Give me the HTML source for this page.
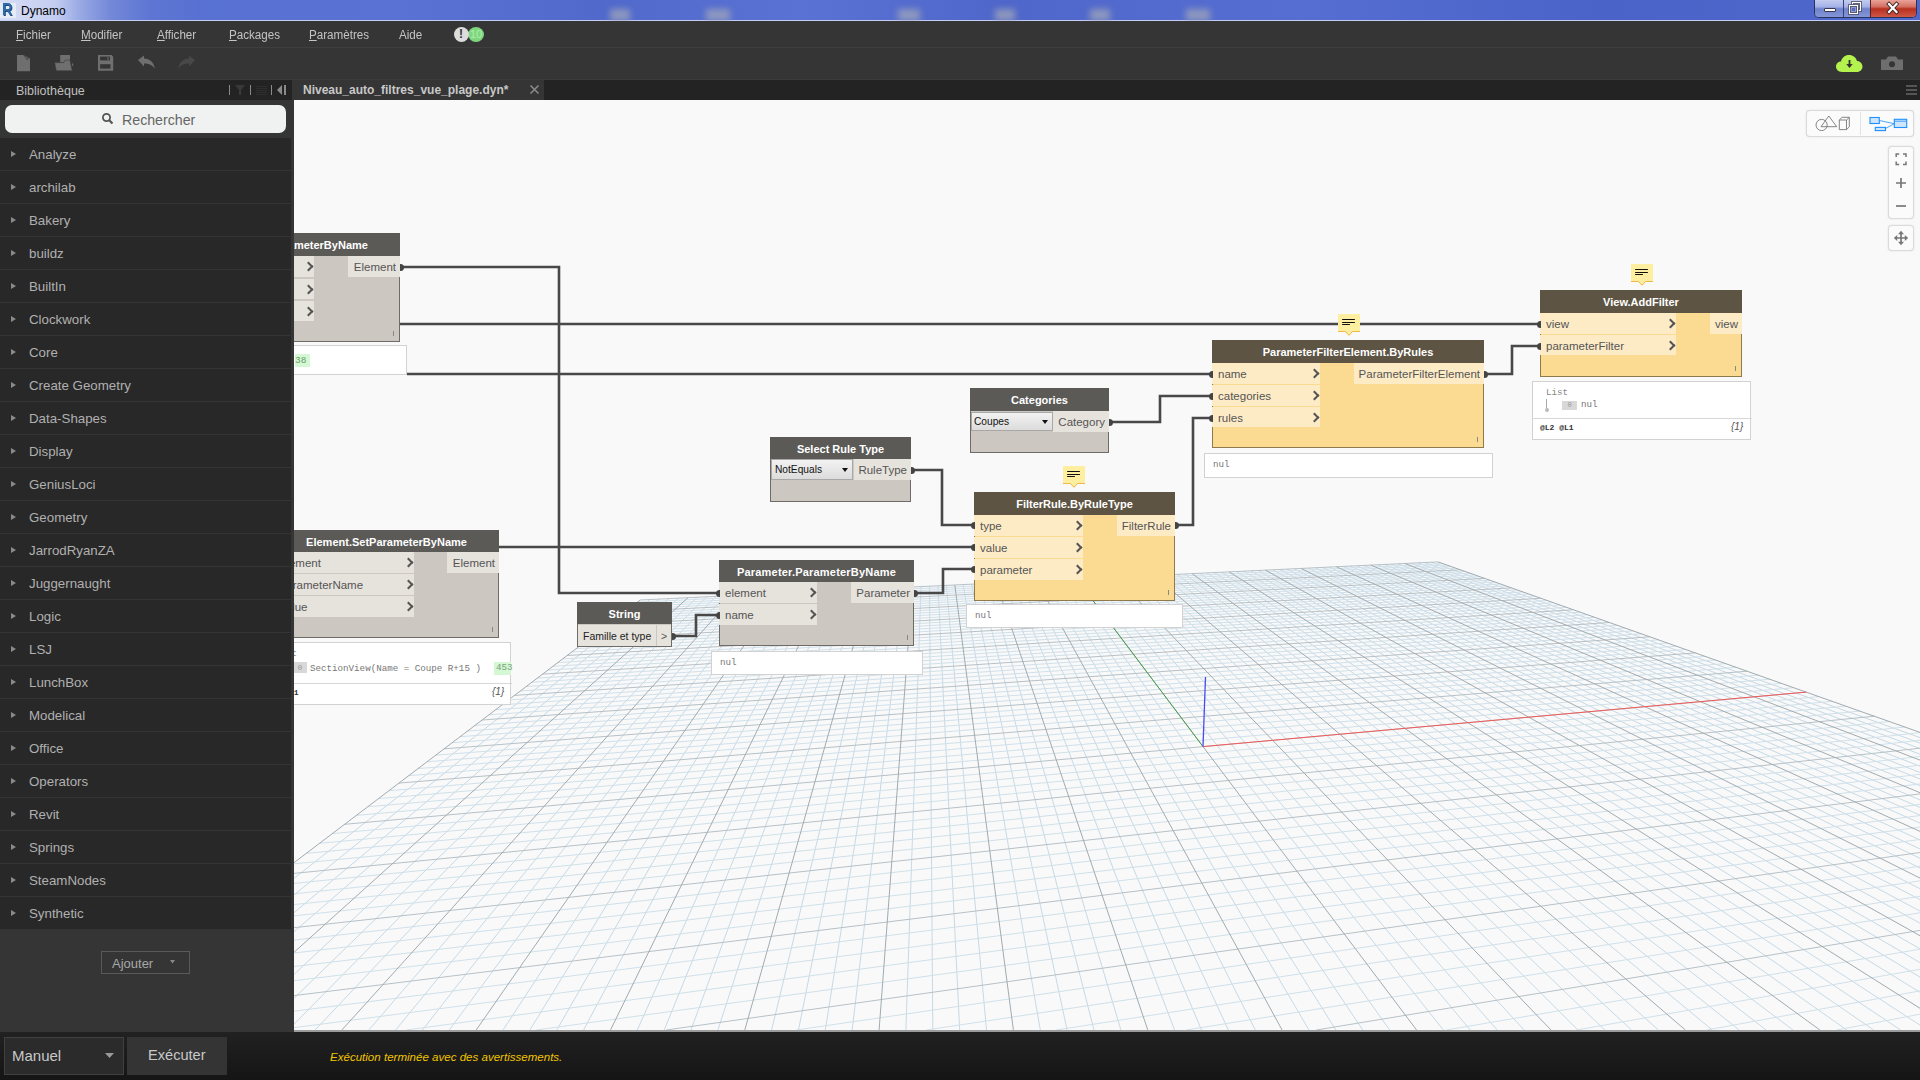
<!DOCTYPE html><html><head><meta charset="utf-8"><style>
*{margin:0;padding:0;box-sizing:border-box}
html,body{width:1920px;height:1080px;overflow:hidden;background:#353535;font-family:"Liberation Sans",sans-serif}
.abs{position:absolute}
.t{position:absolute;white-space:nowrap}
.menu span.u{text-decoration:underline;text-underline-offset:2px}
.lib{position:absolute;left:0;width:291px;height:33px;background:#282828;border-bottom:1px solid #343434}
.lib .tri{position:absolute;left:11px;top:13px;width:0;height:0;border-left:5px solid #8a8a8a;border-top:3.5px solid transparent;border-bottom:3.5px solid transparent}
.lib .lt{position:absolute;left:29px;top:9px;font-size:13.3px;color:#b0b0b0;white-space:nowrap}
.node{position:absolute}
.hdr{position:absolute;left:0;top:0;right:0;color:#fff;font-weight:bold;font-size:11px;text-align:center;white-space:nowrap;overflow:hidden}
.row{position:absolute;font-size:11.5px;color:#555;white-space:nowrap;overflow:hidden}
.chev{position:absolute;width:7px;height:7px;border-right:2.4px solid #555;border-top:2.4px solid #555;transform:rotate(45deg)}
.prev{position:absolute;background:#fff;border:1px solid #d2d2d2;font-family:"Liberation Mono",monospace;font-size:9.2px;color:#777}
.cmt{position:absolute;width:22px;height:22px}
.cmt i{position:absolute;left:4px;height:1.3px;background:#111;border-radius:1px}
</style></head><body>
<div class="abs" style="left:0;top:0;width:1920px;height:21px;background:linear-gradient(90deg,#5570d0 0px,#5a72d3 400px,#5069cb 600px,#5a72d4 800px,#4f67ca 1000px,#566ed2 1300px,#4a63c8 1600px,#5068cc 1920px)"></div>
<div class="abs" style="left:0;top:0;width:300px;height:20px;background:linear-gradient(90deg,rgba(215,222,246,1) 0px,rgba(205,213,243,0.92) 55px,rgba(175,188,234,0.75) 80px,rgba(140,156,222,0.55) 110px,rgba(110,130,214,0.3) 150px,rgba(95,115,210,0.1) 200px,rgba(90,110,208,0) 250px)"></div>
<div class="abs" style="left:0;top:19.6px;width:1920px;height:1.1px;background:#c4cef4"></div><div class="abs" style="left:0;top:20.7px;width:1920px;height:0.3px;background:#606a98"></div>
<div class="abs" style="left:0;top:3px;width:16px;height:15px;background:#e6ecf6"></div>
<div class="t" style="left:2px;top:1px;font-size:17px;font-weight:bold;color:#2f6aa8;line-height:18px;transform:scaleX(0.85);transform-origin:0 0;text-shadow:1px 1px 0 #1c4a7a">R</div>
<div class="t" style="left:21px;top:4px;font-size:12px;color:#000;line-height:15px">Dynamo</div>
<div class="abs" style="left:610px;top:9px;width:20px;height:12px;background:rgba(160,165,185,0.75);filter:blur(3px)"></div>
<div class="abs" style="left:706px;top:9px;width:24px;height:12px;background:rgba(160,165,185,0.75);filter:blur(3px)"></div>
<div class="abs" style="left:898px;top:9px;width:22px;height:12px;background:rgba(160,165,185,0.75);filter:blur(3px)"></div>
<div class="abs" style="left:995px;top:9px;width:20px;height:12px;background:rgba(160,165,185,0.75);filter:blur(3px)"></div>
<div class="abs" style="left:1090px;top:9px;width:20px;height:12px;background:rgba(160,165,185,0.75);filter:blur(3px)"></div>
<div class="abs" style="left:1186px;top:9px;width:24px;height:12px;background:rgba(160,165,185,0.75);filter:blur(3px)"></div>
<div class="abs" style="left:1814px;top:0;width:103px;height:18px;border:1px solid #27345e;border-top:none;border-radius:0 0 5px 5px;overflow:hidden;background:#7d8fd8"><div class="abs" style="left:0;top:0;width:28px;height:17px;background:linear-gradient(#c3ccef,#a4b1e6 40%,#7083cc 52%,#8496d6)"></div><div class="abs" style="left:28px;top:0;width:1px;height:17px;background:#33407a"></div><div class="abs" style="left:29px;top:0;width:26px;height:17px;background:linear-gradient(#c3ccef,#a4b1e6 40%,#7083cc 52%,#8496d6)"></div><div class="abs" style="left:55px;top:0;width:1px;height:17px;background:#5a2020"></div><div class="abs" style="left:56px;top:0;width:47px;height:17px;background:linear-gradient(#e9a39a,#d56e62 40%,#b8301f 52%,#cf5746)"></div><div class="abs" style="left:9px;top:8px;width:12px;height:4px;background:#fff;border:1px solid #3a3a50;border-radius:1px"></div></div>
<svg class="abs" style="left:1814px;top:0" width="103" height="18"><rect x="38.5" y="2.5" width="8" height="8" fill="none" stroke="#3a3a50" stroke-width="2.6"/><rect x="38.5" y="2.5" width="8" height="8" fill="none" stroke="#fff" stroke-width="1.2"/><rect x="35.5" y="5.5" width="8" height="8" fill="#8a9ad8" stroke="#3a3a50" stroke-width="2.6"/><rect x="35.5" y="5.5" width="8" height="8" fill="none" stroke="#fff" stroke-width="1.2"/><rect x="38" y="8" width="3" height="3" fill="#5a6ab8"/><path d="M75 4l7.5 8M82.5 4l-7.5 8" stroke="#3a2020" stroke-width="4" stroke-linecap="square"/><path d="M75 4l7.5 8M82.5 4l-7.5 8" stroke="#fff" stroke-width="2.2" stroke-linecap="square"/></svg>
<div class="abs" style="left:0;top:21px;width:1920px;height:26px;background:#353535"></div>
<div class="abs" style="left:0;top:47px;width:1920px;height:1px;background:#3f3f3f"></div>
<div class="t" style="left:16px;top:28px;font-size:12.5px;color:#c4c4c4;line-height:15px;transform:scaleX(0.93);transform-origin:0 0"><span style="text-decoration:underline;text-underline-offset:1px">F</span>ichier</div>
<div class="t" style="left:81px;top:28px;font-size:12.5px;color:#c4c4c4;line-height:15px;transform:scaleX(0.93);transform-origin:0 0"><span style="text-decoration:underline;text-underline-offset:1px">M</span>odifier</div>
<div class="t" style="left:157px;top:28px;font-size:12.5px;color:#c4c4c4;line-height:15px;transform:scaleX(0.93);transform-origin:0 0"><span style="text-decoration:underline;text-underline-offset:1px">A</span>fficher</div>
<div class="t" style="left:229px;top:28px;font-size:12.5px;color:#c4c4c4;line-height:15px;transform:scaleX(0.93);transform-origin:0 0"><span style="text-decoration:underline;text-underline-offset:1px">P</span>ackages</div>
<div class="t" style="left:309px;top:28px;font-size:12.5px;color:#c4c4c4;line-height:15px;transform:scaleX(0.93);transform-origin:0 0"><span style="text-decoration:underline;text-underline-offset:1px">P</span>aramètres</div>
<div class="t" style="left:399px;top:28px;font-size:12.5px;color:#c4c4c4;line-height:15px;transform:scaleX(0.93);transform-origin:0 0">Aide</div>
<div class="abs" style="left:468px;top:27px;width:16px;height:15px;border-radius:50%;background:#7fd67f"></div>
<div class="t" style="left:470px;top:28px;font-size:11px;color:#a8f0a8;line-height:13px">10</div>
<div class="abs" style="left:454px;top:27px;width:15px;height:15px;border-radius:50%;background:#dcdcdc"></div>
<div class="t" style="left:459px;top:27px;font-size:12px;font-weight:bold;color:#333;line-height:15px">!</div>
<div class="abs" style="left:0;top:48px;width:1920px;height:31px;background:#353535"></div>
<div class="abs" style="left:0;top:79px;width:1920px;height:1px;background:#3c3c3c"></div>
<svg class="abs" style="left:0;top:44px" width="220" height="36"><path d="M17 11h6l7 3.5v12.8h-13z" fill="#6f6f6f"/><path d="M23 11l3.8 5.6l3.2-2.2z" fill="#555"/><path d="M60.2 11h9.8v5h-4.5l-2 2.5h-3.3z" fill="#6f6f6f"/><path d="M54.6 18.6h8.9l2-2.6h4.5l2.2 10.8h-15.9z" fill="#6f6f6f" stroke="#3a3a3a" stroke-width="0.6"/><path d="M72 19.4h1.2v2.6h-0.8z" fill="#6f6f6f"/><path d="M98 11h13.5l1.7 1.7v14.1h-15.2z" fill="#6f6f6f"/><rect x="100.1" y="12.6" width="9.9" height="3.8" fill="#353535"/><rect x="107.4" y="13.2" width="1.1" height="2.6" fill="#6f6f6f"/><rect x="100.1" y="20.2" width="10.4" height="4.4" fill="#353535"/><path d="M138 16l6-4.5v2.9c6 0.3 9.8 3.8 11 10.6c-2.4-3.9-6-5.6-11-5.6v3z" fill="#6f6f6f"/><path d="M195 16l-6-4.5v2.9c-6 0.3-9.8 3.8-11 10.6c2.4-3.9 6-5.6 11-5.6v3z" fill="#484848"/></svg>
<svg class="abs" style="left:1833px;top:48px" width="90" height="31"><path d="M9 24c-4 0-6-3-6-5.5c0-3 2.5-5 5-5c1-4 4-6.5 8-6.5c4 0 7 2.5 8 6c3 0 5.5 2.5 5.5 5.5c0 3-2.5 5.5-5.5 5.5z" fill="#b4f24e"/><path d="M16.5 12v5" stroke="#333" stroke-width="1.8"/><path d="M13.3 16h6.4l-3.2 4z" fill="#333"/><path d="M48 11.5h5l2-3h8l2 3h5v10.5h-22z" fill="#6e6e6e"/><circle cx="59" cy="16.3" r="3" fill="#353535"/></svg>
<div class="abs" style="left:0;top:80px;width:292px;height:20px;background:#232323"></div>
<div class="t" style="left:16px;top:83px;font-size:12.5px;color:#c0c0c0;line-height:16px">Bibliothèque</div>
<svg class="abs" style="left:220px;top:80px" width="72" height="20"><rect x="9" y="5" width="1" height="10" fill="#8a8a8a"/><rect x="30" y="5" width="1" height="10" fill="#8a8a8a"/><rect x="51" y="5" width="1" height="10" fill="#8a8a8a"/><path d="M15 5h10l-3.8 4.8v5.2h-2.4v-5.2z" fill="#393939"/><path d="M36 6.5h11M36 8.5h11M36 10.5h11M36 12.5h11M36 14.5h11" stroke="#2e2e2e" stroke-width="1"/><path d="M62 5v10l-5-5z" fill="#8a8a8a"/><rect x="64" y="5" width="2" height="10" fill="#8a8a8a"/></svg>
<div class="abs" style="left:544px;top:80px;width:1376px;height:20px;background:#232323"></div>
<div class="t" style="left:303px;top:82px;font-size:12px;font-weight:bold;color:#c8c8c8;line-height:16px">Niveau_auto_filtres_vue_plage.dyn*</div>
<svg class="abs" style="left:528px;top:83px" width="14" height="14"><path d="M2.5 2.5l8 8M10.5 2.5l-8 8" stroke="#8a8a8a" stroke-width="1.6"/></svg>
<svg class="abs" style="left:1905px;top:84px" width="13" height="12"><rect x="1" y="1" width="11" height="2" fill="#555"/><rect x="1" y="5" width="11" height="2" fill="#555"/><rect x="1" y="9" width="11" height="2" fill="#555"/></svg>
<div class="abs" style="left:5px;top:105px;width:281px;height:28px;background:#f0f2f1;border-radius:7px"></div>
<svg class="abs" style="left:101px;top:112px" width="14" height="14"><circle cx="5.5" cy="5.5" r="3.6" fill="none" stroke="#555" stroke-width="1.8"/><path d="M8 8l3.5 3.5" stroke="#555" stroke-width="2.2"/></svg>
<div class="t" style="left:122px;top:112px;font-size:14.2px;color:#666;line-height:16px">Rechercher</div>
<div class="lib" style="top:138px"><div class="tri"></div><div class="lt">Analyze</div></div>
<div class="lib" style="top:171px"><div class="tri"></div><div class="lt">archilab</div></div>
<div class="lib" style="top:204px"><div class="tri"></div><div class="lt">Bakery</div></div>
<div class="lib" style="top:237px"><div class="tri"></div><div class="lt">buildz</div></div>
<div class="lib" style="top:270px"><div class="tri"></div><div class="lt">BuiltIn</div></div>
<div class="lib" style="top:303px"><div class="tri"></div><div class="lt">Clockwork</div></div>
<div class="lib" style="top:336px"><div class="tri"></div><div class="lt">Core</div></div>
<div class="lib" style="top:369px"><div class="tri"></div><div class="lt">Create Geometry</div></div>
<div class="lib" style="top:402px"><div class="tri"></div><div class="lt">Data-Shapes</div></div>
<div class="lib" style="top:435px"><div class="tri"></div><div class="lt">Display</div></div>
<div class="lib" style="top:468px"><div class="tri"></div><div class="lt">GeniusLoci</div></div>
<div class="lib" style="top:501px"><div class="tri"></div><div class="lt">Geometry</div></div>
<div class="lib" style="top:534px"><div class="tri"></div><div class="lt">JarrodRyanZA</div></div>
<div class="lib" style="top:567px"><div class="tri"></div><div class="lt">Juggernaught</div></div>
<div class="lib" style="top:600px"><div class="tri"></div><div class="lt">Logic</div></div>
<div class="lib" style="top:633px"><div class="tri"></div><div class="lt">LSJ</div></div>
<div class="lib" style="top:666px"><div class="tri"></div><div class="lt">LunchBox</div></div>
<div class="lib" style="top:699px"><div class="tri"></div><div class="lt">Modelical</div></div>
<div class="lib" style="top:732px"><div class="tri"></div><div class="lt">Office</div></div>
<div class="lib" style="top:765px"><div class="tri"></div><div class="lt">Operators</div></div>
<div class="lib" style="top:798px"><div class="tri"></div><div class="lt">Revit</div></div>
<div class="lib" style="top:831px"><div class="tri"></div><div class="lt">Springs</div></div>
<div class="lib" style="top:864px"><div class="tri"></div><div class="lt">SteamNodes</div></div>
<div class="lib" style="top:897px"><div class="tri"></div><div class="lt">Synthetic</div></div>
<div class="abs" style="left:101px;top:951px;width:89px;height:23px;border:1px solid #5a5a5a"></div>
<div class="t" style="left:112px;top:956px;font-size:13px;color:#a8a8a8;line-height:15px">Ajouter</div>
<svg class="abs" style="left:168px;top:958px" width="10" height="8"><path d="M2 2h5l-2.5 3.5z" fill="#888"/></svg>
<div class="abs" style="left:294px;top:100px;width:1626px;height:930px;background:#f9f9f9;overflow:hidden">
<svg class="abs" style="left:-294px;top:-100px" width="1920" height="1080">
<path d="M294.0 878.3L649.9 599.5M294.0 894.9L659.5 599.0M294.0 912.7L669.0 598.6M294.0 931.8L678.5 598.1M294.0 974.4L697.4 597.2M294.0 998.3L706.8 596.8M294.0 1024.2L716.1 596.3M315.1 1030.0L725.4 595.9M368.8 1030.0L744.0 595.0M395.6 1030.0L753.1 594.6M422.5 1030.0L762.3 594.1M449.3 1030.0L771.4 593.7M503.0 1030.0L789.6 592.8M529.9 1030.0L798.6 592.4M556.8 1030.0L807.5 592.0M583.6 1030.0L816.5 591.6M637.3 1030.0L834.3 590.7M664.2 1030.0L843.1 590.3M691.0 1030.0L851.9 589.9M717.9 1030.0L860.7 589.5M771.6 1030.0L878.1 588.6M798.5 1030.0L886.7 588.2M825.3 1030.0L895.4 587.8M852.2 1030.0L903.9 587.4M905.9 1030.0L921.0 586.6M932.8 1030.0L929.5 586.2M959.7 1030.0L938.0 585.8M986.5 1030.0L946.4 585.4M1040.3 1030.0L963.1 584.6M1067.1 1030.0L971.5 584.2M1094.0 1030.0L979.8 583.8M1120.9 1030.0L988.0 583.4M1174.6 1030.0L1004.5 582.6M1201.5 1030.0L1012.6 582.2M1228.4 1030.0L1020.8 581.8M1255.3 1030.0L1028.9 581.4M1309.0 1030.0L1045.0 580.7M1335.9 1030.0L1053.0 580.3M1362.8 1030.0L1061.0 579.9M1389.7 1030.0L1068.9 579.5M1443.4 1030.0L1084.7 578.8M1470.3 1030.0L1092.6 578.4M1497.2 1030.0L1100.4 578.0M1524.1 1030.0L1108.2 577.7M1577.9 1030.0L1123.7 576.9M1604.8 1030.0L1131.5 576.5M1631.6 1030.0L1139.1 576.2M1658.5 1030.0L1146.8 575.8M1712.3 1030.0L1162.0 575.1M1739.2 1030.0L1169.6 574.7M1766.1 1030.0L1177.2 574.4M1793.0 1030.0L1184.7 574.0M1846.8 1030.0L1199.6 573.3M1873.7 1030.0L1207.1 572.9M1900.6 1030.0L1214.5 572.6M1920.0 1025.1L1221.8 572.2M1920.0 992.3L1236.5 571.5M1920.0 977.1L1243.8 571.2M1920.0 962.6L1251.1 570.8M1920.0 948.8L1258.3 570.5M1920.0 923.1L1272.8 569.8M1920.0 911.1L1279.9 569.5M1920.0 899.6L1287.1 569.1M1920.0 888.7L1294.2 568.8M1920.0 868.0L1308.4 568.1M1920.0 858.3L1315.4 567.8M1920.0 849.0L1322.4 567.4M1920.0 840.0L1329.4 567.1M1920.0 823.1L1343.3 566.4M1920.0 815.1L1350.2 566.1M1920.0 807.4L1357.1 565.8M1920.0 799.9L1364.0 565.5M1920.0 785.8L1377.7 564.8M1920.0 779.0L1384.5 564.5M1920.0 772.5L1391.2 564.2M1920.0 766.2L1398.0 563.8M1920.0 754.2L1411.4 563.2M1920.0 748.5L1418.1 562.9M1920.0 743.0L1424.8 562.6M1920.0 737.6L1431.4 562.2" stroke="#c6d9e6" stroke-width="1" fill="none"/>
<path d="M1836.9 1030.0L1920.0 1014.2M1706.7 1030.0L1920.0 990.9M1576.6 1030.0L1920.0 969.3M1446.4 1030.0L1920.0 949.2M1186.3 1030.0L1920.0 912.8M1056.2 1030.0L1920.0 896.3M926.2 1030.0L1920.0 880.8M796.2 1030.0L1920.0 866.2M536.2 1030.0L1920.0 839.4M406.2 1030.0L1920.0 827.1M294.0 1027.7L1920.0 815.5M294.0 1011.2L1920.0 804.4M294.0 980.7L1920.0 783.9M294.0 966.5L1920.0 774.3M294.0 953.0L1920.0 765.2M294.0 940.1L1920.0 756.5M294.0 915.9L1920.0 740.3M294.0 904.6L1920.0 732.7M294.0 893.8L1904.8 727.0M294.0 883.4L1889.4 721.5M294.0 863.8L1859.9 711.1M306.3 853.4L1845.9 706.1M319.6 843.3L1832.2 701.3M332.4 833.6L1819.0 696.6M356.4 815.4L1793.6 687.7M367.6 806.8L1781.5 683.4M378.5 798.6L1769.7 679.2M388.9 790.7L1758.2 675.1M408.6 775.7L1736.1 667.3M418.0 768.6L1725.5 663.6M427.0 761.8L1715.2 659.9M435.7 755.2L1705.1 656.4M452.2 742.7L1685.8 649.5M460.0 736.7L1676.5 646.2M467.6 731.0L1667.4 643.0M474.9 725.4L1658.5 639.9M489.0 714.8L1641.3 633.8M495.6 709.7L1633.1 630.9M502.1 704.8L1625.0 628.1M508.4 700.0L1617.1 625.3M520.5 690.9L1601.8 619.9M526.2 686.5L1594.4 617.3M531.8 682.2L1587.2 614.7M537.3 678.1L1580.2 612.2M547.8 670.1L1566.5 607.4M552.8 666.3L1559.8 605.0M557.7 662.6L1553.3 602.7M562.4 659.0L1547.0 600.5M571.6 652.0L1534.6 596.1M576.0 648.7L1528.6 594.0M580.4 645.4L1522.8 591.9M584.6 642.2L1517.0 589.9M592.7 636.1L1505.8 585.9M596.6 633.1L1500.4 584.0M600.4 630.2L1495.0 582.1M604.1 627.4L1489.8 580.3M611.4 621.9L1479.6 576.7M614.9 619.2L1474.7 574.9M618.3 616.6L1469.8 573.2M621.6 614.1L1465.0 571.5M628.1 609.2L1455.7 568.2M631.2 606.8L1451.2 566.6M634.3 604.5L1446.7 565.0M637.3 602.2L1442.3 563.5" stroke="#d0e0ea" stroke-width="1" fill="none"/>
<path d="M1316.3 1030.0L1920.0 930.4M666.2 1030.0L1920.0 852.5M294.0 995.6L1920.0 793.9M294.0 927.7L1920.0 748.2M294.0 873.4L1874.4 716.2M344.6 824.3L1806.1 692.1M399.0 783.1L1747.0 671.2M444.1 748.8L1695.3 652.9M482.1 720.0L1649.8 636.8M514.5 695.4L1609.4 622.5M542.6 674.1L1573.2 609.8M567.1 655.5L1540.7 598.3M588.7 639.1L1511.4 587.9M607.8 624.6L1484.7 578.4M624.9 611.6L1460.3 569.8M640.3 600.0L1438.0 561.9" stroke="#b6c1c7" stroke-width="1" fill="none"/>
<path d="M294.0 862.7L640.3 600.0M294.0 952.3L688.0 597.7M341.9 1030.0L734.7 595.5M476.2 1030.0L780.5 593.3M610.5 1030.0L825.4 591.1M744.8 1030.0L869.4 589.0M879.1 1030.0L912.5 587.0M1013.4 1030.0L954.8 585.0M1147.8 1030.0L996.3 583.0M1282.1 1030.0L1036.9 581.1M1416.6 1030.0L1076.8 579.1M1551.0 1030.0L1116.0 577.3M1685.4 1030.0L1154.4 575.5M1819.9 1030.0L1192.2 573.7M1920.0 1008.3L1229.2 571.9M1920.0 935.7L1265.6 570.2M1920.0 878.1L1301.3 568.5M1920.0 831.4L1336.4 566.8M1920.0 792.7L1370.8 565.1M1920.0 760.1L1404.7 563.5M1920.0 732.4L1438.0 561.9" stroke="#a0abb1" stroke-width="1" fill="none"/>
<path d="M1203.0 746.6L1806.1 692.1" stroke="#f05a5a" stroke-width="1"/>
<path d="M1203.0 746.6L1076.8 579.1" stroke="#4a9e4a" stroke-width="1"/>
<path d="M1203.0 746.6L1205.5 677" stroke="#4a4af0" stroke-width="1.3"/>
</svg>
</div>
<div class="abs" style="left:294px;top:100px;width:1626px;height:930px;overflow:hidden">
<svg class="abs" style="left:-294px;top:-100px" width="1920" height="1080">
<path d="M400 267 L559 267 L559 593 L719 593" stroke="#484848" stroke-width="2.6" fill="none" stroke-linejoin="miter"/>
<path d="M294 324 L1540 324" stroke="#484848" stroke-width="2.6" fill="none" stroke-linejoin="miter"/>
<path d="M407 374 L1212 374" stroke="#484848" stroke-width="2.6" fill="none" stroke-linejoin="miter"/>
<path d="M499 547 L974 547" stroke="#484848" stroke-width="2.6" fill="none" stroke-linejoin="miter"/>
<path d="M911 470 L942 470 L942 525 L974 525" stroke="#484848" stroke-width="2.6" fill="none" stroke-linejoin="miter"/>
<path d="M672 636 L696 636 L696 615 L719 615" stroke="#484848" stroke-width="2.6" fill="none" stroke-linejoin="miter"/>
<path d="M914 593 L943 593 L943 569 L974 569" stroke="#484848" stroke-width="2.6" fill="none" stroke-linejoin="miter"/>
<path d="M1109 422 L1160 422 L1160 396 L1212 396" stroke="#484848" stroke-width="2.6" fill="none" stroke-linejoin="miter"/>
<path d="M1175 525 L1193 525 L1193 418 L1212 418" stroke="#484848" stroke-width="2.6" fill="none" stroke-linejoin="miter"/>
<path d="M1484 374 L1512 374 L1512 346 L1540 346" stroke="#484848" stroke-width="2.6" fill="none" stroke-linejoin="miter"/>
</svg>
<div class="node" style="left:-119px;top:133px;width:225px;height:109px;background:#ccc7c0;outline:1px solid #6f6c68;outline-offset:-1px">
<div class="hdr" style="height:23px;line-height:25px;background:#5c5a57">Element.SetParameterByName</div>
<div class="row" style="left:0;top:23px;width:139px;height:21px;line-height:23px;background:#e6e2dc;padding-left:6px"></div>
<div class="chev" style="left:130px;top:30.0px"></div>
<div class="row" style="left:0;top:46px;width:139px;height:20px;line-height:22px;background:#e6e2dc;padding-left:6px"></div>
<div class="chev" style="left:130px;top:52.5px"></div>
<div class="row" style="left:0;top:68px;width:139px;height:20px;line-height:22px;background:#e6e2dc;padding-left:6px"></div>
<div class="chev" style="left:130px;top:74.5px"></div>
<div class="row" style="left:173px;top:23px;width:52px;height:21px;line-height:23px;background:#e6e2dc;text-align:right;padding-right:4px">Element</div>
<div class="abs" style="left:218px;top:98px;width:1px;height:5px;background:#888"></div>
</div>
<div class="abs" style="left:106px;top:163.5px;width:4px;height:7px;border-radius:0 3.5px 3.5px 0;background:#444"></div>
<div class="prev" style="left:-119px;top:245px;width:232px;height:30px"><div class="abs" style="left:119px;top:8px;width:15px;height:13px;background:#d4f7d4;color:#6a9a6a;font-size:9.5px;line-height:13px;padding-left:0px">38</div></div>
<div class="node" style="left:-20px;top:430px;width:225px;height:108px;background:#ccc7c0;outline:1px solid #6f6c68;outline-offset:-1px">
<div class="hdr" style="height:22px;line-height:24px;background:#5c5a57">Element.SetParameterByName</div>
<div class="row" style="left:0;top:22px;width:140px;height:21px;line-height:23px;background:#e6e2dc;padding-left:6px">element</div>
<div class="chev" style="left:131px;top:29.0px"></div>
<div class="row" style="left:0;top:44px;width:140px;height:21px;line-height:23px;background:#e6e2dc;padding-left:6px">parameterName</div>
<div class="chev" style="left:131px;top:51.0px"></div>
<div class="row" style="left:0;top:66px;width:140px;height:21px;line-height:23px;background:#e6e2dc;padding-left:6px">value</div>
<div class="chev" style="left:131px;top:73.0px"></div>
<div class="row" style="left:173px;top:22px;width:52px;height:21px;line-height:23px;background:#e6e2dc;text-align:right;padding-right:4px">Element</div>
<div class="abs" style="left:218px;top:97px;width:1px;height:5px;background:#888"></div>
</div>
<div class="prev" style="left:-33px;top:542px;width:250px;height:63px"><div class="t" style="left:13px;top:5px;line-height:12px;color:#888">List</div><div class="abs" style="left:0;top:40px;width:250px;height:1px;background:#d8d8d8"></div><div class="abs" style="left:31px;top:19px;width:14px;height:11px;background:#d8d8d8;color:#999;font-size:8px;line-height:11px;text-align:center">0</div><div class="t" style="left:48px;top:19px;line-height:13px">SectionView(Name = Coupe R+15 )</div><div class="abs" style="left:232px;top:19px;width:17px;height:13px;background:#d4f7d4;color:#7aa07a;line-height:12px;padding-left:2px">453</div><div class="t" style="left:3px;top:45px;font-size:8px;color:#333;line-height:10px;font-weight:bold">@L2 @L1</div><div class="t" style="left:230px;top:43px;font-family:Liberation Sans;font-style:italic;font-size:10px;color:#555">{1}</div></div>
<div class="node" style="left:476px;top:337px;width:141px;height:65px;background:#ccc7c0;outline:1px solid #6f6c68;outline-offset:-1px">
<div class="hdr" style="height:22px;line-height:24px;background:#5c5a57">Select Rule Type</div>
<div class="row" style="left:84px;top:22px;width:57px;height:21px;line-height:23px;background:#e6e2dc;text-align:right;padding-right:4px">RuleType</div>
</div>
<div class="abs" style="left:477px;top:359px;width:82px;height:21px;background:linear-gradient(#f2f2f2,#dcdcdc);border:1px solid #a8a8a8;font-size:10.2px;color:#111;line-height:19px;padding-left:3px">NotEquals</div>
<svg class="abs" style="left:547px;top:367px" width="8" height="6"><path d="M1 1h6l-3 4z" fill="#111"/></svg>
<div class="abs" style="left:617px;top:366.5px;width:4px;height:7px;border-radius:0 3.5px 3.5px 0;background:#444"></div>
<div class="node" style="left:283px;top:502px;width:95px;height:45px;background:#ccc7c0;outline:1px solid #6f6c68;outline-offset:-1px">
<div class="hdr" style="height:22px;line-height:24px;background:#5c5a57">String</div>
</div>
<div class="abs" style="left:284px;top:525px;width:78px;height:21px;background:#e6e2dc;font-size:10.5px;color:#222;line-height:23px;padding-left:5px;white-space:nowrap">Famille et type</div>
<div class="abs" style="left:363px;top:525px;width:14px;height:21px;background:#e6e2dc;font-size:10.5px;color:#555;line-height:23px;padding-left:4px">&gt;</div>
<div class="abs" style="left:378px;top:532.5px;width:4px;height:7px;border-radius:0 3.5px 3.5px 0;background:#444"></div>
<div class="node" style="left:425px;top:460px;width:195px;height:86px;background:#ccc7c0;outline:1px solid #6f6c68;outline-offset:-1px">
<div class="hdr" style="height:22px;line-height:24px;background:#5c5a57"><span style="letter-spacing:0.2px">Parameter.ParameterByName</span></div>
<div class="row" style="left:0;top:22px;width:98px;height:21px;line-height:23px;background:#e6e2dc;padding-left:6px">element</div>
<div class="chev" style="left:89px;top:29.0px"></div>
<div class="row" style="left:0;top:44px;width:98px;height:21px;line-height:23px;background:#e6e2dc;padding-left:6px">name</div>
<div class="chev" style="left:89px;top:51.0px"></div>
<div class="row" style="left:132px;top:22px;width:63px;height:21px;line-height:23px;background:#e6e2dc;text-align:right;padding-right:4px">Parameter</div>
<div class="abs" style="left:188px;top:75px;width:1px;height:5px;background:#888"></div>
</div>
<div class="abs" style="left:422px;top:489.5px;width:4px;height:7px;border-radius:3.5px 0 0 3.5px;background:#444"></div>
<div class="abs" style="left:422px;top:511.5px;width:4px;height:7px;border-radius:3.5px 0 0 3.5px;background:#444"></div>
<div class="abs" style="left:620px;top:489.5px;width:4px;height:7px;border-radius:0 3.5px 3.5px 0;background:#444"></div>
<div class="prev" style="left:417px;top:551px;width:212px;height:24px"><div class="t" style="left:8px;top:5px;line-height:12px">nul</div></div>
<div class="node" style="left:676px;top:288px;width:139px;height:65px;background:#ccc7c0;outline:1px solid #6f6c68;outline-offset:-1px">
<div class="hdr" style="height:23px;line-height:25px;background:#5c5a57">Categories</div>
<div class="row" style="left:83px;top:23px;width:56px;height:21px;line-height:23px;background:#e6e2dc;text-align:right;padding-right:4px">Category</div>
</div>
<div class="abs" style="left:677px;top:312px;width:82px;height:19px;background:linear-gradient(#f2f2f2,#dcdcdc);border:1px solid #a8a8a8;font-size:10.2px;color:#111;line-height:17px;padding-left:2px">Coupes</div>
<svg class="abs" style="left:747px;top:319px" width="8" height="6"><path d="M1 1h6l-3 4z" fill="#111"/></svg>
<div class="abs" style="left:815px;top:318.5px;width:4px;height:7px;border-radius:0 3.5px 3.5px 0;background:#444"></div>
<div class="cmt" style="left:769px;top:366px"><svg width="22" height="22" style="position:absolute;left:0;top:0"><path d="M0 0H22V17.5H15L11 21.6L7 17.5H0Z" fill="#fdeea0"/><path d="M0 17.5H7.5L11 21.3L14.5 17.5H22" fill="none" stroke="#f0b848" stroke-width="1"/></svg><i style="top:5px;width:13px"></i><i style="top:8px;width:13px"></i><i style="top:10.1px;width:8px"></i></div>
<div class="node" style="left:680px;top:392px;width:201px;height:109px;background:#fbda91;outline:1px solid #8f7a4e;outline-offset:-1px">
<div class="hdr" style="height:23px;line-height:25px;background:#5e5443">FilterRule.ByRuleType</div>
<div class="row" style="left:0;top:23px;width:109px;height:21px;line-height:23px;background:#fdebc6;padding-left:6px">type</div>
<div class="chev" style="left:100px;top:30.0px"></div>
<div class="row" style="left:0;top:45px;width:109px;height:21px;line-height:23px;background:#fdebc6;padding-left:6px">value</div>
<div class="chev" style="left:100px;top:52.0px"></div>
<div class="row" style="left:0;top:67px;width:109px;height:21px;line-height:23px;background:#fdebc6;padding-left:6px">parameter</div>
<div class="chev" style="left:100px;top:74.0px"></div>
<div class="row" style="left:143px;top:23px;width:58px;height:21px;line-height:23px;background:#fdebc6;text-align:right;padding-right:4px">FilterRule</div>
<div class="abs" style="left:194px;top:98px;width:1px;height:5px;background:#888"></div>
</div>
<div class="abs" style="left:677px;top:421.5px;width:4px;height:7px;border-radius:3.5px 0 0 3.5px;background:#444"></div>
<div class="abs" style="left:677px;top:443.5px;width:4px;height:7px;border-radius:3.5px 0 0 3.5px;background:#444"></div>
<div class="abs" style="left:677px;top:465.5px;width:4px;height:7px;border-radius:3.5px 0 0 3.5px;background:#444"></div>
<div class="abs" style="left:881px;top:421.5px;width:4px;height:7px;border-radius:0 3.5px 3.5px 0;background:#444"></div>
<div class="prev" style="left:672px;top:504px;width:217px;height:24px"><div class="t" style="left:8px;top:5px;line-height:12px">nul</div></div>
<div class="cmt" style="left:1044px;top:214px"><svg width="22" height="22" style="position:absolute;left:0;top:0"><path d="M0 0H22V17.5H15L11 21.6L7 17.5H0Z" fill="#fdeea0"/><path d="M0 17.5H7.5L11 21.3L14.5 17.5H22" fill="none" stroke="#f0b848" stroke-width="1"/></svg><i style="top:5px;width:13px"></i><i style="top:8px;width:13px"></i><i style="top:10.1px;width:8px"></i></div>
<div class="node" style="left:918px;top:240px;width:272px;height:108px;background:#fbda91;outline:1px solid #8f7a4e;outline-offset:-1px">
<div class="hdr" style="height:23px;line-height:25px;background:#5e5443">ParameterFilterElement.ByRules</div>
<div class="row" style="left:0;top:23px;width:108px;height:21px;line-height:23px;background:#fdebc6;padding-left:6px">name</div>
<div class="chev" style="left:99px;top:30.0px"></div>
<div class="row" style="left:0;top:45px;width:108px;height:21px;line-height:23px;background:#fdebc6;padding-left:6px">categories</div>
<div class="chev" style="left:99px;top:52.0px"></div>
<div class="row" style="left:0;top:67px;width:108px;height:20px;line-height:22px;background:#fdebc6;padding-left:6px">rules</div>
<div class="chev" style="left:99px;top:73.5px"></div>
<div class="row" style="left:142px;top:23px;width:130px;height:21px;line-height:23px;background:#fdebc6;text-align:right;padding-right:4px">ParameterFilterElement</div>
<div class="abs" style="left:265px;top:97px;width:1px;height:5px;background:#888"></div>
</div>
<div class="abs" style="left:915px;top:270.5px;width:4px;height:7px;border-radius:3.5px 0 0 3.5px;background:#444"></div>
<div class="abs" style="left:915px;top:292.5px;width:4px;height:7px;border-radius:3.5px 0 0 3.5px;background:#444"></div>
<div class="abs" style="left:915px;top:314.5px;width:4px;height:7px;border-radius:3.5px 0 0 3.5px;background:#444"></div>
<div class="abs" style="left:1190px;top:270.5px;width:4px;height:7px;border-radius:0 3.5px 3.5px 0;background:#444"></div>
<div class="prev" style="left:910px;top:353px;width:289px;height:25px"><div class="t" style="left:8px;top:5px;line-height:12px">nul</div></div>
<div class="cmt" style="left:1337px;top:164px"><svg width="22" height="22" style="position:absolute;left:0;top:0"><path d="M0 0H22V17.5H15L11 21.6L7 17.5H0Z" fill="#fdeea0"/><path d="M0 17.5H7.5L11 21.3L14.5 17.5H22" fill="none" stroke="#f0b848" stroke-width="1"/></svg><i style="top:5px;width:13px"></i><i style="top:8px;width:13px"></i><i style="top:10.1px;width:8px"></i></div>
<div class="node" style="left:1246px;top:190px;width:202px;height:87px;background:#fbda91;outline:1px solid #8f7a4e;outline-offset:-1px">
<div class="hdr" style="height:23px;line-height:25px;background:#5e5443">View.AddFilter</div>
<div class="row" style="left:0;top:23px;width:136px;height:21px;line-height:23px;background:#fdebc6;padding-left:6px">view</div>
<div class="chev" style="left:127px;top:30.0px"></div>
<div class="row" style="left:0;top:45px;width:136px;height:20px;line-height:22px;background:#fdebc6;padding-left:6px">parameterFilter</div>
<div class="chev" style="left:127px;top:51.5px"></div>
<div class="row" style="left:170px;top:23px;width:32px;height:21px;line-height:23px;background:#fdebc6;text-align:right;padding-right:4px">view</div>
<div class="abs" style="left:195px;top:76px;width:1px;height:5px;background:#888"></div>
</div>
<div class="abs" style="left:1243px;top:220.5px;width:4px;height:7px;border-radius:3.5px 0 0 3.5px;background:#444"></div>
<div class="abs" style="left:1243px;top:242.5px;width:4px;height:7px;border-radius:3.5px 0 0 3.5px;background:#444"></div>
<div class="prev" style="left:1238px;top:281px;width:219px;height:59px"><div class="t" style="left:13px;top:5px;line-height:12px;color:#888">List</div><div class="abs" style="left:13px;top:17px;width:1px;height:10px;background:#aaa"></div><div class="abs" style="left:11.5px;top:26px;width:4px;height:4px;border-radius:50%;background:#bbb"></div><div class="abs" style="left:29px;top:19px;width:15px;height:9px;background:#d8d8d8;color:#999;font-size:7px;line-height:9px;text-align:center">0</div><div class="t" style="left:48px;top:16px;line-height:13px">nul</div><div class="abs" style="left:0;top:36px;width:219px;height:1px;background:#d8d8d8"></div><div class="t" style="left:7px;top:41px;font-size:8px;color:#333;line-height:10px;font-weight:bold">@L2 @L1</div><div class="t" style="left:198px;top:39px;font-family:Liberation Sans;font-style:italic;font-size:10px;color:#555">{1}</div></div>
</div>
<div class="abs" style="left:1807px;top:111px;width:106px;height:25px;background:#fbfbfb;border-radius:3px;box-shadow:0 0 1.5px 0.5px #d4d4d4"></div>
<div class="abs" style="left:1860px;top:112px;width:1px;height:23px;background:#e2e2e2"></div>
<svg class="abs" style="left:1807px;top:111px" width="106" height="25"><circle cx="14.6" cy="14" r="5.6" fill="none" stroke="#777" stroke-width="0.9"/><path d="M14 15.7l7.8-10.7l7.9 10.7z" fill="none" stroke="#777" stroke-width="0.9"/><path d="M32.3 9h7.2v9.6h-7.2zM32.3 9l2.8-2.7h7.2v9.6l-2.8 2.7M39.5 9l2.8-2.7" fill="none" stroke="#777" stroke-width="0.9"/><rect x="63" y="6.5" width="9.3" height="6" fill="#cfe5fb" stroke="#1e90ff" stroke-width="1.1"/><rect x="68.3" y="16.4" width="10.2" height="3.2" fill="#cfe5fb" stroke="#1e90ff" stroke-width="1.1"/><rect x="87.3" y="8.3" width="12.4" height="8.2" fill="#cfe5fb" stroke="#1e90ff" stroke-width="1.1"/><path d="M87.3 10.2h12.4" stroke="#1e90ff" stroke-width="0.8"/><path d="M72.3 9.5l15 3.2M78.5 17.5l8.8-4.8" stroke="#1e90ff" stroke-width="0.8"/></svg>
<div class="abs" style="left:1889px;top:147px;width:24px;height:71px;background:#fbfbfb;border-radius:3px;box-shadow:0 0 1.5px 0.5px #d4d4d4"></div>
<svg class="abs" style="left:1889px;top:147px" width="24" height="71"><path d="M7.2 10v-3h3M14 7h3v3M17 14.5v3h-3M10.2 17.5h-3v-3" fill="none" stroke="#777" stroke-width="1.5"/><path d="M12 31v10M7 36h10" stroke="#777" stroke-width="1.7"/><path d="M7 59h10" stroke="#777" stroke-width="1.7"/></svg>
<div class="abs" style="left:1889px;top:226px;width:24px;height:24px;background:#fbfbfb;border-radius:3px;box-shadow:0 0 1.5px 0.5px #d4d4d4"></div>
<svg class="abs" style="left:1889px;top:226px" width="24" height="24"><path d="M12 7v10M7 12h10" stroke="#777" stroke-width="1.7"/><path d="M12 4.8l-3 3.4h6zM12 19.2l-3-3.4h6zM4.8 12l3.4-3v6zM19.2 12l-3.4-3v6z" fill="#777"/></svg>
<div class="abs" style="left:294px;top:1030px;width:1626px;height:2px;background:#9c9c9c"></div><div class="abs" style="left:0;top:1032px;width:1920px;height:48px;background:linear-gradient(#212121,#151515)"></div>
<div class="abs" style="left:4px;top:1037px;width:120px;height:38px;background:#2b2b2b;border:1px solid #404040"></div>
<div class="t" style="left:12px;top:1047px;font-size:15px;color:#c8c8c8;line-height:17px">Manuel</div>
<svg class="abs" style="left:104px;top:1052px" width="12" height="8"><path d="M1 1h9l-4.5 5z" fill="#999"/></svg>
<div class="abs" style="left:127px;top:1037px;width:100px;height:38px;background:#343434"></div>
<div class="t" style="left:148px;top:1047px;font-size:14.6px;color:#c8c8c8;line-height:17px">Exécuter</div>
<div class="t" style="left:330px;top:1050px;font-size:11.55px;font-style:italic;color:#f0c400;line-height:14px">Exécution terminée avec des avertissements.</div>
</body></html>
